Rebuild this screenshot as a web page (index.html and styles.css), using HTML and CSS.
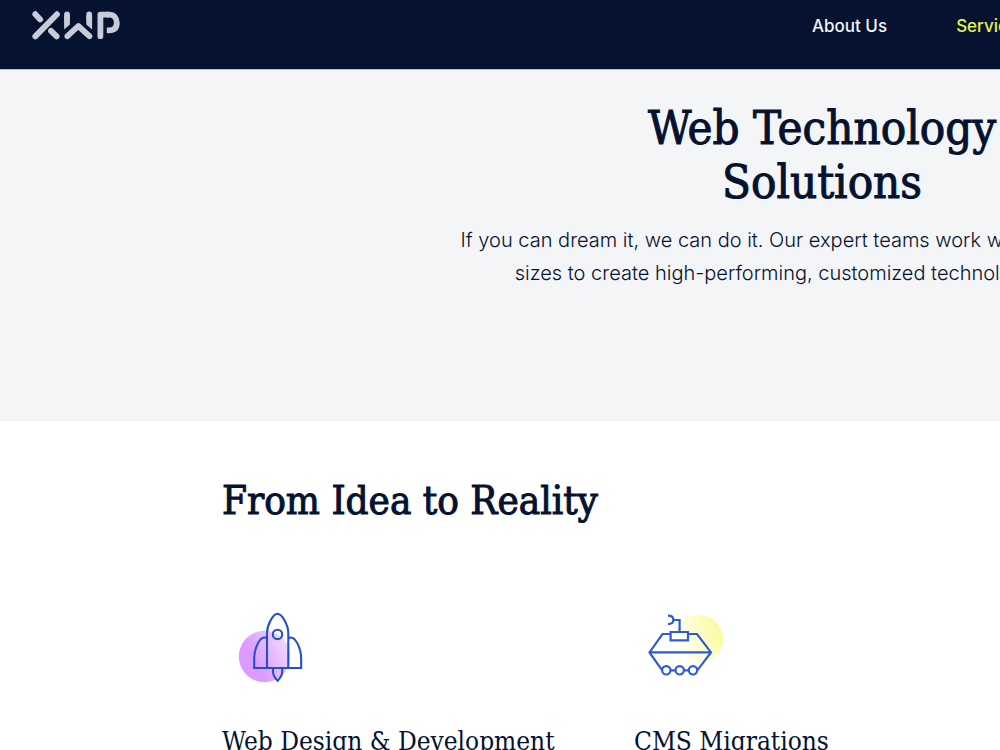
FILE: index.html
```html
<!DOCTYPE html>
<html lang="en">
<head>
  <meta charset="UTF-8">
  <meta name="viewport" content="width=device-width, initial-scale=1">
  <title>Web Technology Solutions - XWP</title>
  <link rel="stylesheet" href="styles.css">
</head>
<body>
<header class="site-header">
  <a href="#" class="logo" aria-label="XWP">
    <svg width="88" height="29" viewBox="0 0 88 29" fill="none" stroke="#c8ccd9" stroke-width="5.8" stroke-linecap="round" stroke-linejoin="round">
      <path d="M25 3.2L3.3 25.4M3.3 3.2L8.2 8.4M19 19.9L24.6 25.4"/>
      <path d="M35.4 25.2L46.3 15L57.4 25.2"/>
      <path d="M35 3.4V7M57.2 3.4V7"/>
      <path d="M32.1 5H37.9V13.4L32.1 18.6ZM54.3 5H60.1V18.6L54.3 13.4Z" fill="#c8ccd9" stroke="none"/>
      <path d="M68.4 25.2V3.6H76"/>
      <path d="M75 3.6H77C82 3.6 84.8 7 84.8 11.8C84.8 16.8 82 19.4 77 19.4H74.8" stroke-linecap="butt"/>
    </svg>
  </a>
  <nav class="main-nav">
    <a href="#">About Us</a>
    <a href="#" class="active">Services</a>
  </nav>
</header>

<section class="hero">
  <h1>Web Technology<br>Solutions</h1>
  <p>If you can dream it, we can do it. Our expert teams work with companies of all<br>sizes to create high-performing, customized technology solutions.</p>
</section>

<main class="container">
  <h2>From Idea to Reality</h2>
  <div class="services">
    <article class="service">
      <svg width="100" height="100" viewBox="-3 0 100 100" fill="none" stroke="#2450c8" stroke-width="2.1">
        <defs>
          <linearGradient id="pink" x1="0.3" y1="0.6" x2="1.1" y2="0.2">
            <stop offset="0" stop-color="#dc9bff"/>
            <stop offset="1" stop-color="#f6e4ff"/>
          </linearGradient>
        </defs>
        <circle cx="39.5" cy="56.5" r="25.7" fill="url(#pink)" stroke="none"/>
        <path d="M42 68V33C42 25 48 13.8 52.5 13.8C57 13.8 63.3 25 63.3 33V68"/>
        <path d="M42 38.5C35 33.5 29.2 49 29.2 59V68H76.2V59C76.2 49 70 33.5 63.3 38.5"/>
        <circle cx="52.5" cy="34.4" r="4.7"/>
        <path d="M48 68V72C48 76 51 79 52.6 80.8C54.3 79 57.2 76 57.2 72V68"/>
      </svg>
      <h3>Web Design &amp; Development</h3>
    </article>
    <article class="service">
      <svg width="100" height="100" viewBox="-1 0 100 100" fill="none" stroke="#2f5bd3" stroke-width="2.2">
        <defs>
          <linearGradient id="yellow" x1="1" y1="0.3" x2="0.1" y2="0.7">
            <stop offset="0" stop-color="#fbfb9a"/>
            <stop offset="1" stop-color="#fffff8"/>
          </linearGradient>
        </defs>
        <circle cx="64" cy="38.7" r="24" fill="url(#yellow)" stroke="none"/>
        <path d="M35.5 34H27.5L14.5 52.4L27 70.2M53 34H62L76 52.4L62.5 70.2M14.5 52.4H76"/>
        <path d="M35.6 32H53V40.3H35.6ZM44.6 32V20H38.4"/>
        <path d="M33 15.7C36.5 15.7 38.4 17.5 38.4 20C38.4 22.5 36.5 24 33 24"/>
        <circle cx="31.3" cy="70.3" r="4.2"/>
        <circle cx="44.7" cy="70.3" r="4.2"/>
        <circle cx="58" cy="70.3" r="4.2"/>
        <path d="M35.5 70.3H40.5M49 70.3H53.8"/>
      </svg>
      <h3>CMS Migrations</h3>
    </article>
  </div>
</main>
</body>
</html>
```
FILE: styles.css
```css
* {
  box-sizing: border-box;
}
html {
  overflow-x: hidden;
}
body {
  margin: 0;
  min-width: 1644px;
  font-family: Inter, sans-serif;
  color: #051230;
  background: #fff;
}
h1, h2, h3 {
  font-family: "Roboto Slab", "DejaVu Serif Condensed", "DejaVu Serif", serif;
  font-weight: 500;
  margin: 0;
}
h1, h2 {
  -webkit-text-stroke: 1px #051230;
}
.site-header {
  display: flex;
  align-items: flex-start;
  gap: 692px;
  padding: 11px 32px 28px;
  background: #051230;
  border-bottom: 1px solid #b9bdc8;
}
.logo svg {
  display: block;
}
.main-nav {
  display: flex;
  gap: 69px;
  line-height: 30px;
}
.main-nav a {
  color: #f4f5f7;
  font-size: 17px;
  font-weight: 500;
  text-decoration: none;
}
.main-nav .active {
  color: #e6f04b;
}
.hero {
  padding: 31px 32px 131px;
  background: #f4f5f7;
  text-align: center;
}
.hero h1 {
  font-size: 47px;
  line-height: 54px;
}
.hero p {
  margin: 15px 0 0;
  font-size: 20px;
  font-weight: 300;
  line-height: 33px;
}
.container {
  max-width: 1200px;
  margin: 0 auto;
  padding: 52px 0 60px;
}
.container h2 {
  font-size: 40px;
  line-height: 54px;
}
.services {
  display: grid;
  grid-template-columns: repeat(3, 1fr);
  gap: 36px;
  margin-top: 73px;
}
.service svg {
  display: block;
}
.service h3 {
  margin-top: 23px;
  font-size: 26px;
  line-height: 36px;
  font-weight: 400;
}
```
